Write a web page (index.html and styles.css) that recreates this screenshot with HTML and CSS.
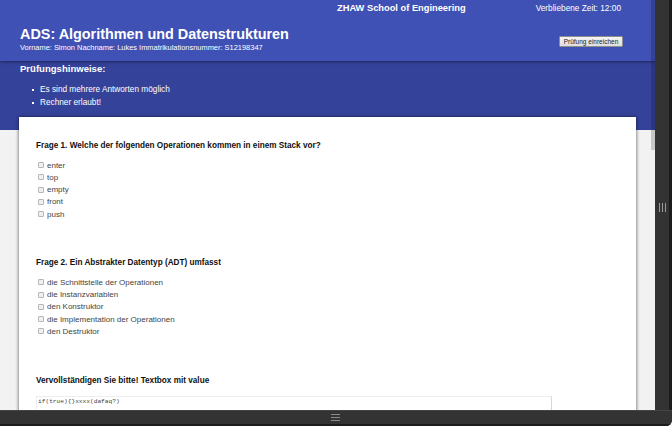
FILE: index.html
```html
<!DOCTYPE html>
<html lang="de">
<head>
<meta charset="utf-8">
<title>ADS Prüfung</title>
<link rel="stylesheet" href="styles.css">
</head>
<body>
<div class="device">
  <div class="screen">
    <header class="topbar">
      <div class="meta">
        <span></span>
        <span class="school">ZHAW School of Engineering</span>
        <span class="timer">Verbliebene Zeit: 12:00</span>
      </div>
      <div class="headline">
        <div>
          <h1 class="title">ADS: Algorithmen und Datenstrukturen</h1>
          <p class="student">Vorname: Simon Nachname: Lukes Immatrikulationsnummer: S12198347</p>
        </div>
        <button class="submit" type="button">Prüfung einreichen</button>
      </div>
    </header>
    <section class="notes">
      <h2 class="notes-title">Prüfungshinweise:</h2>
      <ul class="notes-list">
        <li>Es sind mehrere Antworten möglich</li>
        <li>Rechner erlaubt!</li>
      </ul>
    </section>
    <main class="card">
      <div class="question">
        <h3 class="q-title">Frage 1. Welche der folgenden Operationen kommen in einem Stack vor?</h3>
        <label class="opt"><input type="checkbox">enter</label>
        <label class="opt"><input type="checkbox">top</label>
        <label class="opt"><input type="checkbox">empty</label>
        <label class="opt"><input type="checkbox">front</label>
        <label class="opt"><input type="checkbox">push</label>
      </div>
      <div class="question">
        <h3 class="q-title">Frage 2. Ein Abstrakter Datentyp (ADT) umfasst</h3>
        <label class="opt"><input type="checkbox">die Schnittstelle der Operationen</label>
        <label class="opt"><input type="checkbox">die Instanzvariablen</label>
        <label class="opt"><input type="checkbox">den Konstruktor</label>
        <label class="opt"><input type="checkbox">die Implementation der Operationen</label>
        <label class="opt"><input type="checkbox">den Destruktor</label>
      </div>
      <div class="question">
        <h3 class="q-title">Vervollständigen Sie bitte! Textbox mit value</h3>
        <div class="codebox">if(true){}xxxx(dafaq?)</div>
      </div>
    </main>
    <div class="thumb"></div>
  </div>
  <div class="side">
    <span class="grip"></span>
  </div>
  <div class="bottombar">
    <span class="menu"><i></i><i></i><i></i></span>
  </div>
</div>
</body>
</html>
```
FILE: styles.css
```css
html, body {
  margin: 0;
  padding: 0;
  background: #f2f2f2;
  font-family: "Liberation Sans", Arial, sans-serif;
}

.device {
  display: grid;
  grid-template-columns: 655px 17px;
  grid-template-rows: 410px 16px;
  width: 672px;
  height: 426px;
  background: #333333;
  border-bottom-right-radius: 6px;
  overflow: hidden;
}

.screen {
  position: relative;
  overflow: hidden;
  background: #f2f2f2;
}

.topbar {
  height: 61px;
  box-sizing: border-box;
  background: #3f51b5;
  color: #fff;
  padding: 3px 32px 0 20px;
  box-shadow: 0 1px 3px rgba(0, 0, 0, 0.45);
  position: relative;
  z-index: 2;
}

.meta {
  display: grid;
  grid-template-columns: 317px 1fr auto;
  line-height: 10px;
  height: 10px;
}

.school {
  font-weight: bold;
  font-size: 9.3px;
}

.timer {
  font-size: 8.3px;
  margin-right: 2px;
}

.headline {
  display: flex;
  justify-content: space-between;
  align-items: flex-start;
  margin-top: 12px;
}

.title {
  margin: 0;
  font-size: 14.4px;
  line-height: 18px;
  font-weight: bold;
}

.student {
  margin: 0;
  font-size: 7.45px;
  line-height: 9px;
}

.submit {
  margin-top: 11px;
  width: 64px;
  height: 11px;
  padding: 0;
  font-family: "Liberation Sans", Arial, sans-serif;
  font-size: 6.5px;
  line-height: 9px;
  color: #222;
  background: linear-gradient(#f4f4f4, #dedede);
  border: 1px solid #8e8e8e;
  border-radius: 1px;
}

.notes {
  background: #35429a;
  color: #fff;
  padding: 2px 20px 0;
  height: 69px;
  box-sizing: border-box;
}

.notes-title {
  margin: 0;
  font-size: 9.55px;
  line-height: 12px;
  font-weight: bold;
}

.notes-list {
  margin: 8px 0 0;
  padding-left: 20px;
  font-size: 8.25px;
  line-height: 13px;
  list-style: none;
}

.notes-list li {
  position: relative;
}

.notes-list li::before {
  content: "";
  position: absolute;
  left: -8px;
  top: 6px;
  width: 2px;
  height: 2px;
  background: #fff;
}

.card {
  background: #fff;
  margin: -13px 19px 0;
  padding: 24px 17px 0;
  height: 400px;
  box-shadow: -1px 0 3px rgba(0, 0, 0, 0.35), 1px 0 3px rgba(0, 0, 0, 0.35);
  position: relative;
  z-index: 1;
}

.question {
  display: flex;
  flex-direction: column;
  margin-bottom: 38px;
}

.q-title {
  margin: 0 0 8px;
  font-size: 8.2px;
  line-height: 10px;
  font-weight: bold;
  color: #111;
}

.opt {
  display: flex;
  align-items: center;
  height: 12.25px;
  font-size: 8px;
  color: #444;
}

.opt input {
  appearance: none;
  -webkit-appearance: none;
  width: 6px;
  height: 6px;
  margin: 0 3px 0 2px;
  border: 1px solid #b5b5b5;
  border-radius: 1px;
  background: #f0f0f0;
  box-sizing: border-box;
}

.codebox {
  margin-top: 2px;
  width: 516px;
  height: 30px;
  box-sizing: border-box;
  border: 1px solid #eeeeee;
  border-right-color: #d6d6d6;
  padding: 1px 1px;
  font-family: "Liberation Mono", "DejaVu Sans Mono", monospace;
  font-size: 6.2px;
  line-height: 8px;
  color: #444;
}

.thumb {
  position: absolute;
  right: 0;
  top: 0;
  width: 4px;
  height: 150px;
  background: rgba(0, 0, 0, 0.18);
  z-index: 5;
}

.side {
  display: flex;
  align-items: center;
  justify-content: center;
  background: #333333;
  border-right: 3px solid #1c1c1c;
  box-sizing: border-box;
}

.grip {
  width: 7px;
  height: 9px;
  background: repeating-linear-gradient(90deg, #9a9a9a 0 1px, transparent 1px 3px);
  margin-top: 5px;
}

.bottombar {
  grid-column: 1 / 3;
  display: flex;
  justify-content: center;
  align-items: center;
  background: #333333;
  border-bottom: 2px solid #1c1c1c;
  border-top: 1px solid #444;
}

.menu {
  display: flex;
  flex-direction: column;
  gap: 2px;
  width: 9px;
  margin-right: 1px;
}

.menu i {
  display: block;
  height: 1px;
  background: #8a8a8a;
}
```
